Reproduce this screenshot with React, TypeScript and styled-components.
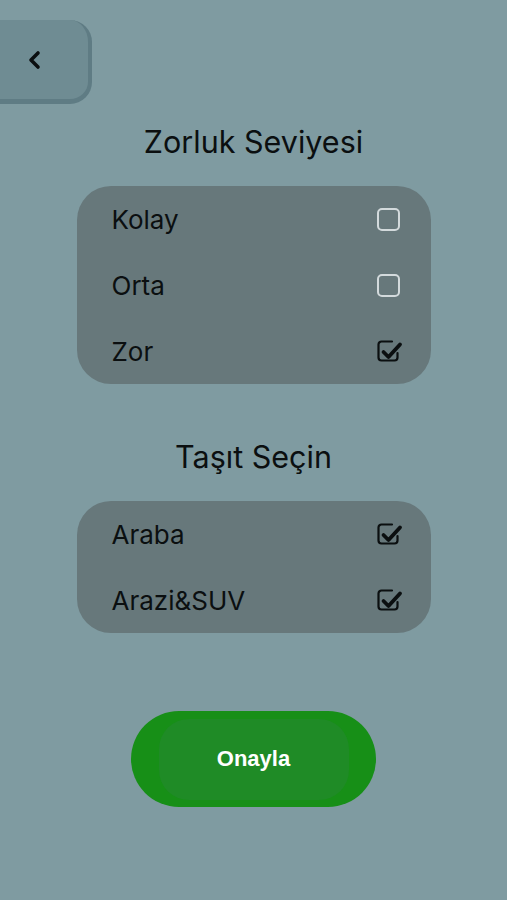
import React, { useState } from "react";
import styled, { createGlobalStyle } from "styled-components";

const Global = createGlobalStyle`
  html, body { margin: 0; padding: 0; background: #7f9ba1; }
  body { font-family: Inter, "Noto Sans", "Liberation Sans", sans-serif; }
  * { box-sizing: border-box; }
`;

const Page = styled.div`
  width: 507px;
  height: 900px;
  background: #7f9ba1;
  display: flex;
  flex-direction: column;
  align-items: center;
  padding-top: 20px;
`;

const TopBar = styled.div`
  align-self: stretch;
  display: flex;
`;

const BackButton = styled.button`
  width: 92px;
  height: 84px;
  border: none;
  border-right: 4px solid #5f7c84;
  border-bottom: 5px solid #5f7c84;
  border-radius: 0 22px 22px 0;
  background: #6f8c93;
  display: flex;
  align-items: center;
  padding: 0 0 0 27px;
  cursor: pointer;
`;

const Title = styled.h2<{ $top: number }>`
  margin: ${(p) => p.$top}px 0 0;
  font-size: 30.5px;
  line-height: 36px;
  font-weight: 400;
  color: #0b0f10;
`;

const Card = styled.div`
  margin-top: 26px;
  width: 354px;
  background: #67787b;
  border-radius: 34px;
  display: flex;
  flex-direction: column;
`;

const Row = styled.div`
  height: 66px;
  display: flex;
  align-items: center;
  justify-content: space-between;
  padding: 0 28px 0 35px;
  cursor: pointer;
`;

const Label = styled.span`
  font-size: 26px;
  color: #0b0f10;
`;

const BoxWrap = styled.span`
  width: 28px;
  height: 28px;
  display: flex;
`;

const ConfirmOuter = styled.button`
  margin-top: 78px;
  width: 245px;
  height: 96px;
  border-radius: 48px;
  border: none;
  background: #178f17;
  display: flex;
  align-items: center;
  justify-content: center;
  padding: 0;
  cursor: pointer;
`;

const ConfirmInner = styled.span`
  width: 190px;
  height: 81px;
  border-radius: 30px;
  background: #1f8b26;
  display: flex;
  align-items: center;
  justify-content: center;
  color: #ffffff;
  font-family: "Liberation Sans", Arial, sans-serif;
  font-weight: 700;
  font-size: 22px;
`;

const Chevron = () => (
  <svg width="16" height="20" viewBox="0 0 16 20">
    <path d="M11 3 L4 10 L11 17" fill="none" stroke="#0b0f10" strokeWidth="3.6" strokeLinecap="round" strokeLinejoin="round" />
  </svg>
);

const Check = ({ on }: { on: boolean }) =>
  on ? (
    <svg width="28" height="28" viewBox="0 0 28 28">
      <path d="M17 4.5 H6.5 A3 3 0 0 0 3.5 7.5 V20.5 A3 3 0 0 0 6.5 23.5 H19.5 A3 3 0 0 0 22.5 20.5 V16" fill="none" stroke="#0b0f10" strokeWidth="2.2" strokeLinecap="round" />
      <path d="M8.5 15 L13.5 20 L25 7.5" fill="none" stroke="#0b0f10" strokeWidth="3.8" strokeLinecap="round" strokeLinejoin="round" />
    </svg>
  ) : (
    <svg width="28" height="28" viewBox="0 0 28 28">
      <rect x="3" y="4" width="21" height="21" rx="4" fill="none" stroke="#d3dadc" strokeWidth="2" />
    </svg>
  );

export default function App() {
  const [level, setLevel] = useState({ Kolay: false, Orta: false, Zor: true } as Record<string, boolean>);
  const [veh, setVeh] = useState({ Araba: true, "Arazi&SUV": true } as Record<string, boolean>);

  return (
    <>
      <Global />
      <Page>
        <TopBar>
          <BackButton aria-label="Geri">
            <Chevron />
          </BackButton>
        </TopBar>
        <Title $top={20}>Zorluk Seviyesi</Title>
        <Card>
          {Object.keys(level).map((k) => (
            <Row key={k} onClick={() => setLevel({ ...level, [k]: !level[k] })}>
              <Label>{k}</Label>
              <BoxWrap>
                <Check on={level[k]} />
              </BoxWrap>
            </Row>
          ))}
        </Card>
        <Title $top={55}>Taşıt Seçin</Title>
        <Card>
          {Object.keys(veh).map((k) => (
            <Row key={k} onClick={() => setVeh({ ...veh, [k]: !veh[k] })}>
              <Label>{k}</Label>
              <BoxWrap>
                <Check on={veh[k]} />
              </BoxWrap>
            </Row>
          ))}
        </Card>
        <ConfirmOuter>
          <ConfirmInner>Onayla</ConfirmInner>
        </ConfirmOuter>
      </Page>
    </>
  );
}
